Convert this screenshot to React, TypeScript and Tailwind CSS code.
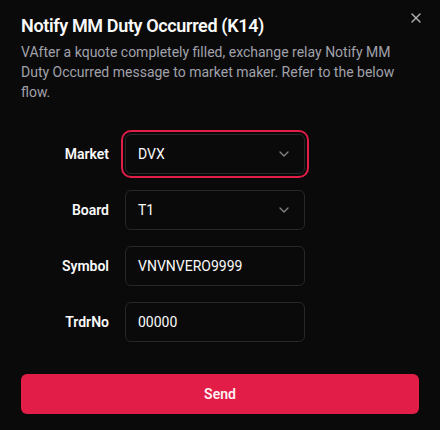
import React from "react";
import { ChevronDown, X } from "lucide-react";

const font = { fontFamily: 'Roboto, "Noto Sans", Arial, sans-serif' };

function Row({ label, children }: { label: string; children: React.ReactNode }) {
  return (
    <div className="flex items-center gap-4">
      <label className="w-[88px] text-right text-sm font-semibold text-[#fafafa]">{label}</label>
      {children}
    </div>
  );
}

function SelectBox({ value, focused }: { value: string; focused?: boolean }) {
  return (
    <div
      className={
        focused
          ? "flex h-10 w-[180px] items-center justify-between rounded-md border border-[#27272a] bg-[#0a0a0a] px-3 text-sm text-[#fafafa] ring-2 ring-[#e11d48] ring-offset-2 ring-offset-[#0a0a0a]"
          : "flex h-10 w-[180px] items-center justify-between rounded-md border border-[#27272a] bg-[#0a0a0a] px-3 text-sm text-[#fafafa]"
      }
    >
      <span>{value}</span>
      <ChevronDown className="h-4 w-4 opacity-50" />
    </div>
  );
}

function InputBox({ value }: { value: string }) {
  return (
    <div className="flex h-10 w-[180px] items-center rounded-md border border-[#27272a] bg-[#0a0a0a] px-3 text-sm text-[#fafafa]">
      {value}
    </div>
  );
}

export default function App() {
  return (
    <div style={font} className="relative h-[430px] w-[440px] bg-[#0a0a0a] px-[21px] pt-[12px]">
      <button className="absolute right-4 top-[10px] text-[#fafafa] opacity-70">
        <X className="h-4 w-4" />
      </button>
      <div className="flex flex-col gap-[2px]">
        <h2 className="text-lg font-semibold leading-7 tracking-[-0.02em] text-[#fafafa]">Notify MM Duty Occurred (K14)</h2>
        <p className="text-sm leading-5 text-[#a1a1aa]">
          VAfter a kquote completely filled, exchange relay Notify MM Duty Occurred message to market maker. Refer to the below flow.
        </p>
      </div>
      <div className="flex flex-col gap-4 py-8">
        <Row label="Market">
          <SelectBox value="DVX" focused />
        </Row>
        <Row label="Board">
          <SelectBox value="T1" />
        </Row>
        <Row label="Symbol">
          <InputBox value="VNVNVERO9999" />
        </Row>
        <Row label="TrdrNo">
          <InputBox value="00000" />
        </Row>
      </div>
      <button className="flex h-10 w-full items-center justify-center rounded-md bg-[#e11d48] text-sm font-semibold text-[#fff1f2]">
        Send
      </button>
    </div>
  );
}
